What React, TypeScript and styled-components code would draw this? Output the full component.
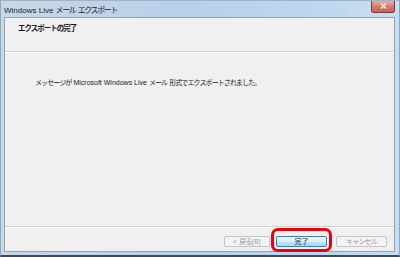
import React from "react";
import styled, { createGlobalStyle } from "styled-components";

const GlobalStyle = createGlobalStyle`
  html, body {
    margin: 0;
    padding: 0;
    background: #ffffff;
  }
  body {
    font-family: "Liberation Sans", "Noto Sans CJK JP", sans-serif;
  }
`;

const Frame = styled.div`
  width: 400px;
  height: 257px;
  box-sizing: border-box;
  display: flex;
  flex-direction: column;
  background: linear-gradient(90deg, #c9d7e6 0%, #b8d0ea 45%, #bcd6ee 75%, #c8ddf1 100%);
  border-bottom: 2px solid #3d4a57;
  border-left: 1px solid #8fa6bf;
  border-right: 1px solid #8fa6bf;
  border-top: 1px solid #9fb2c6;
`;

const TitleBar = styled.div`
  height: 16px;
  flex: none;
  display: flex;
  align-items: center;
  justify-content: space-between;
  padding: 0 4px 0 3px;
`;

const TitleText = styled.span`
  font-size: 8px;
  line-height: 1;
  color: #1e1e1e;
  margin-top: 3px;
  white-space: pre;
`;

// Japanese runs are set tighter, the way the narrow UI font in the shot reads
const Jp = styled.span<{ tight?: number }>`
  font-family: "Noto Sans CJK JP", sans-serif;
  letter-spacing: ${(p) => (p.tight ?? -1)}px;
`;

const CloseButton = styled.div`
  width: 22px;
  height: 11px;
  margin-top: -5px;
  border: 1px solid #7a3a33;
  border-top: none;
  border-radius: 0 0 3px 3px;
  background: linear-gradient(180deg, #e3aca3 0%, #d27f72 50%, #c46256 100%);
  display: flex;
  align-items: center;
  justify-content: center;
`;

const Client = styled.div`
  flex: 1;
  margin: 0 4px 3px 3px;
  border: 1px solid #8ea3b8;
  background: #f0f0f0;
  display: flex;
  flex-direction: column;
`;

const Header = styled.div`
  height: 34px;
  flex: none;
  padding: 4px 0 0 13px;
  box-sizing: border-box;
  border-bottom: 1px solid #d0d0d0;
  box-shadow: 0 1px 0 #ffffff;
`;

const HeaderTitle = styled.div`
  font-size: 7.5px;
  font-weight: 700;
  color: #1a1a1a;
  line-height: 12px;
`;

const Content = styled.div`
  flex: 1;
  padding: 24px 0 0 30px;
`;

const Message = styled.div`
  font-size: 7px;
  color: #222222;
  line-height: 12px;
  white-space: pre;
`;

const Footer = styled.div`
  height: 25px;
  flex: none;
  border-top: 1px solid #d0d0d0;
  box-shadow: inset 0 1px 0 #ffffff;
  display: flex;
  justify-content: flex-end;
  align-items: flex-start;
  padding: 9px 7px 0 0;
  box-sizing: border-box;
  gap: 9px;
`;

const Button = styled.div<{ primary?: boolean; disabled?: boolean }>`
  position: relative;
  width: 51px;
  height: 11px;
  box-sizing: border-box;
  border-radius: 2px;
  border: 1px solid
    ${(p) => (p.primary ? "#3c7fb1" : p.disabled ? "#c4c4c4" : "#8f8f8f")};
  background: ${(p) =>
    p.primary
      ? "linear-gradient(180deg, #eaf6fd 0%, #d9f0fc 50%, #bee6fd 51%, #a7d9f5 100%)"
      : p.disabled
      ? "#f4f4f4"
      : "linear-gradient(180deg, #f2f2f2 0%, #ebebeb 50%, #dddddd 51%, #cfcfcf 100%)"};
  color: ${(p) => (p.disabled ? "#9a9a9a" : "#1a1a1a")};
  font-size: 7px;
  line-height: 9px;
  display: flex;
  align-items: center;
  justify-content: center;
  white-space: pre;
`;

const BackButton = styled(Button)`
  width: 46px;
  margin-right: -3px;
`;

const Highlight = styled.div`
  position: absolute;
  top: -9px;
  bottom: -6px;
  left: -6px;
  right: -6px;
  border: 3px solid #e8000b;
  border-radius: 7px;
  pointer-events: none;
`;

export default function App() {
  return (
    <>
      <GlobalStyle />
      <Frame>
        <TitleBar>
          <TitleText>
            Windows Live <Jp tight={-1.4}>メール</Jp> <Jp tight={-1.4}>エクスポート</Jp>
          </TitleText>
          <CloseButton>
            <svg width="7" height="6" viewBox="0 0 7 6">
              <path d="M1 0.5 L6 5.5 M6 0.5 L1 5.5" stroke="#fbeeee" strokeWidth="1.3" />
            </svg>
          </CloseButton>
        </TitleBar>
        <Client>
          <Header>
            <HeaderTitle>
              <Jp>エクスポートの完了</Jp>
            </HeaderTitle>
          </Header>
          <Content>
            <Message>
              <Jp tight={-0.9}>メッセージが</Jp> Microsoft Windows Live <Jp tight={-0.9}>メール</Jp>{" "}
              <Jp tight={-0.9}>形式でエクスポートされました。</Jp>
            </Message>
          </Content>
          <Footer>
            <BackButton disabled>
              &lt; <Jp tight={-0.8}>戻る</Jp>(B)
            </BackButton>
            <Button primary>
              <Jp tight={0}>完了</Jp>
              <Highlight />
            </Button>
            <Button disabled>
              <Jp tight={-0.8}>キャンセル</Jp>
            </Button>
          </Footer>
        </Client>
      </Frame>
    </>
  );
}
